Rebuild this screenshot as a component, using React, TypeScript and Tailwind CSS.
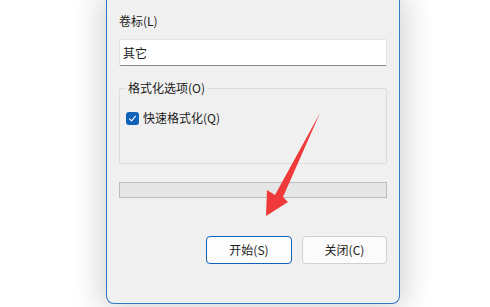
import React from "react";

export default function App() {
  const font = { fontFamily: '"Noto Sans CJK SC", "Microsoft YaHei", sans-serif' };
  return (
    <div className="relative w-[490px] h-[307px] bg-white overflow-hidden" style={font}>
      <div className="pl-[106px]">
        <div className="w-[294px] h-[304px] bg-[#f0f0f0] border border-t-0 border-[#2f78c4] rounded-b-[8px] shadow-[0_0_30px_6px_rgba(0,0,0,0.17)] px-[12px] pt-[13px] text-[12px] text-[#1b1b1b]">
          <div className="leading-[16px]">卷标(L)</div>
          <div className="mt-[10px] h-[27px] bg-white border border-[#e3e3e3] border-b-[#868686] rounded-[2px] pl-[3px] flex items-center leading-[16px]">
            其它
          </div>
          <fieldset className="mt-[14px] border border-[#dcdcdc] rounded-[2px] pl-[6px] pb-[37px] min-w-0">
            <legend className="px-[2px] leading-[16px]">格式化选项(O)</legend>
            <div className="mt-[14px] flex items-center gap-[4px] leading-[16px]">
              <div className="w-[13px] h-[13px] rounded-[3px] bg-[#0f62b8] flex items-center justify-center">
                <svg width="9" height="9" viewBox="0 0 9 9">
                  <path d="M1.5 4.8 L3.6 6.8 L7.6 2.2" fill="none" stroke="white" strokeWidth="1.1" strokeLinecap="round" strokeLinejoin="round" />
                </svg>
              </div>
              <span>快速格式化(Q)</span>
            </div>
          </fieldset>
          <div className="mt-[18px] h-[16px] bg-[#e6e6e6] border border-[#bcbcbc]" />
          <div className="mt-[38px] flex justify-end gap-[10px]">
            <div className="w-[86px] h-[28px] rounded-[4px] border border-[#0f62b8] bg-[#fdfdfd] flex items-center justify-center leading-[16px]">
              开始(S)
            </div>
            <div className="w-[85px] h-[28px] rounded-[4px] border border-[#d0d0d0] bg-[#fbfbfb] flex items-center justify-center leading-[16px]">
              关闭(C)
            </div>
          </div>
        </div>
      </div>
      <svg className="absolute left-0 top-0 pointer-events-none" width="490" height="307" viewBox="0 0 490 307">
        <polygon points="320,113 283,197 288,202 266,216 267,190 275,195" fill="#f03a3a" />
      </svg>
    </div>
  );
}
